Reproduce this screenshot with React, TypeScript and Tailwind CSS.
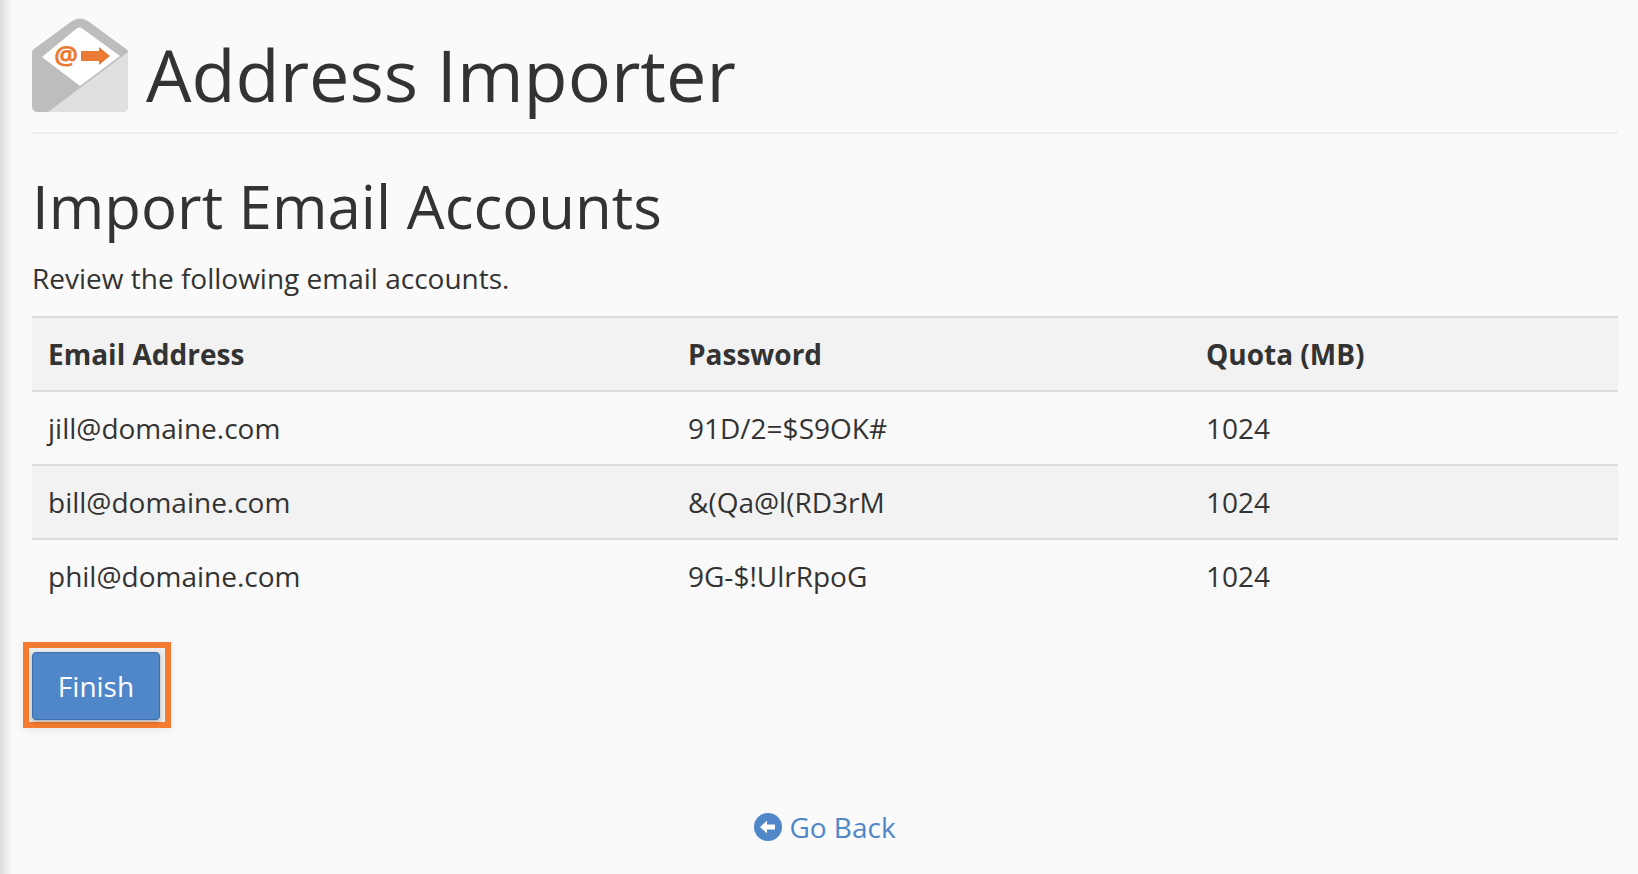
const rows = [
  { email: "jill@domaine.com", password: "91D/2=$S9OK#", quota: "1024" },
  { email: "bill@domaine.com", password: "&(Qa@l(RD3rM", quota: "1024" },
  { email: "phil@domaine.com", password: "9G-$!UlrRpoG", quota: "1024" },
];

function ImporterIcon() {
  return (
    <svg viewBox="0 0 96 94" className="h-[94px] w-[96px] shrink-0" aria-hidden>
      <path d="M0 34 Q0 32 2 31 L40 3 Q48 -2 56 3 L94 31 Q96 32 96 34 L96 88 Q96 94 90 94 L6 94 Q0 94 0 88 Z" fill="#bdbdbd" />
      <path d="M10 39 L44 11 Q47 8 51 11 L88 38 L48 68 Z" fill="#fff" />
      <path d="M96 34 L96 88 Q96 94 90 94 L16 94 Z" fill="#e0e0e0" />
      <text x="34" y="47" fontSize="27" fontWeight="700" fill="#ea7b35" textAnchor="middle" fontFamily="'Open Sans', sans-serif">@</text>
      <path d="M49 33 L67 33 L67 29 L78 38 L67 47 L67 43 L49 43 Z" fill="#ea7b35" />
    </svg>
  );
}

export default function App() {
  return (
    <div className="flex min-h-[874px] bg-[#fafafa] font-['Open_Sans',sans-serif] text-[#333]">
      <div className="w-[12px] shrink-0 bg-gradient-to-r from-[#dcdcdc] to-[#fafafa]" />
      <main className="min-w-0 flex-1 pl-[20px] pr-[20px] pt-[18px]">
        <header className="flex h-[116px] items-start gap-[18px] border-b-2 border-[#eeeeee]">
          <ImporterIcon />
          <h1 className="text-[72px] leading-[112px]">Address Importer</h1>
        </header>
        <h2 className="mt-[33px] text-[60px] leading-[78px]">Import Email Accounts</h2>
        <p className="mt-[13px] text-[28px] leading-[40px]">Review the following email accounts.</p>
        <table className="mt-[18px] w-full table-fixed border-collapse text-[28px]">
          <thead>
            <tr className="h-[74px] border-y-2 border-[#dddddd] bg-[#f2f2f2] text-left">
              <th className="w-[640px] pl-[16px] font-bold">Email Address</th>
              <th className="w-[518px] pl-[16px] font-bold">Password</th>
              <th className="pl-[16px] font-bold">Quota (MB)</th>
            </tr>
          </thead>
          <tbody>
            {rows.map((row, i) => (
              <tr key={row.email} className={`${i === 2 ? "h-[73px]" : "h-[74px]"} ${i === 1 ? "bg-[#f2f2f2]" : "bg-[#f9f9f9]"} ${i < 2 ? "border-b-2 border-[#dddddd]" : ""}`}>
                <td className={i === 2 ? "pb-[1px] pl-[16px]" : "pl-[16px]"}>{row.email}</td>
                <td className={i === 2 ? "pb-[1px] pl-[16px]" : "pl-[16px]"}>{row.password}</td>
                <td className={i === 2 ? "pb-[1px] pl-[16px]" : "pl-[16px]"}>{row.quota}</td>
              </tr>
            ))}
          </tbody>
        </table>
        <div className="-ml-[9px] mt-[30px] w-fit border-[6px] border-[#f47b30] bg-[#ececec] pb-[2px] pl-[3px] pr-[5px] pt-[4px] shadow-[0_2px_8px_rgba(0,0,0,0.08)]">
          <button className="block h-[68px] w-[128px] rounded-[4px] border-[1.5px] border-[#3f70ad] bg-[#4f87c9] text-[28px] text-white shadow-[0_2px_4px_rgba(0,0,0,0.25)]">
            Finish
          </button>
        </div>
        <div className="mt-[79px] flex items-center justify-center gap-[7px] text-[28px] leading-[40px] text-[#4f87c9]">
          <svg viewBox="0 0 28 28" className="h-[28px] w-[28px]" aria-hidden>
            <circle cx="14" cy="14" r="14" fill="#4f87c9" />
            <path d="M6 14 L13 7.5 L13 11.5 L21 11.5 L21 16.5 L13 16.5 L13 20.5 Z" fill="#fff" />
          </svg>
          <a>Go Back</a>
        </div>
      </main>
    </div>
  );
}
